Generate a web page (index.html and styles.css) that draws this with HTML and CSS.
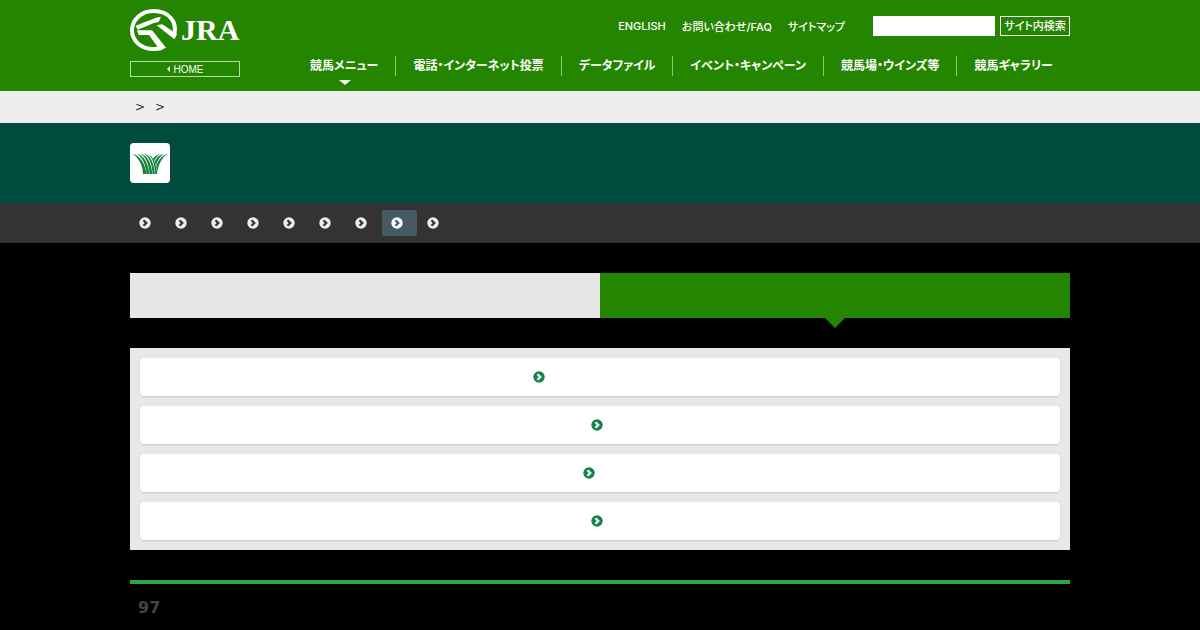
FILE: index.html
```html
<!DOCTYPE html>
<html lang="ja">

<head>
    <meta charset="UTF-8">
    <meta name="viewport" content="width=device-width, initial-scale=1.0">
    <link rel="stylesheet" href="styles.css">
    <title>JRA</title>
</head>

<body>
    <svg class="defs" width="0" height="0" aria-hidden="true">
        <symbol id="arrow" viewBox="0 0 12 12">
            <path fill="currentColor" fill-rule="evenodd" d="M6 .3a5.7 5.7 0 1 0 0 11.4a5.7 5.7 0 1 0 0-11.4zM5.3 2.4L8.9 6L5.3 9.6L3.7 8L5.7 6L3.7 4z" />
        </symbol>
    </svg>

    <header class="header">
        <div class="inner header-inner">
            <div class="brand">
                <a class="logo" href="#">
                    <svg class="logo-mark" viewBox="0 0 141 126" aria-hidden="true">
                        <path fill="none" stroke="#fff" stroke-width="12" d="M131 82C145 38 116 6 71 6C34 6 6 32 6 64C6 96 34 120 71 120C82 120 88 119 96 117" />
                        <path fill="#fff" d="M17 50L78 26L93 23L86 39L72 42L23 62zM80 49L97 46L141 76L133 91zM21 64L66 64L73 72L108 116L90 124L57 78L26 78z" />
                    </svg>
                    <span>JRA</span>
                </a>
                <a class="home" href="#">HOME</a>
            </div>
            <div class="menus">
                <div class="utility">
                    <a href="#">ENGLISH</a>
                    <a href="#">お問い合わせ/FAQ</a>
                    <a href="#">サイトマップ</a>
                    <form class="search">
                        <input type="text" name="q" aria-label="サイト内検索">
                        <button type="submit">サイト内検索</button>
                    </form>
                </div>
                <nav class="gnav">
                    <a class="current" href="#">競馬メニュー</a>
                    <a href="#">電話・インターネット投票</a>
                    <a href="#">データファイル</a>
                    <a href="#">イベント・キャンペーン</a>
                    <a href="#">競馬場・ウインズ等</a>
                    <a href="#">競馬ギャラリー</a>
                </nav>
            </div>
        </div>
    </header>

    <div class="breadcrumb">
        <div class="inner"><span>&gt;</span><span>&gt;</span></div>
    </div>

    <div class="title">
        <div class="inner">
            <svg class="title-icon" viewBox="0 0 120 120" aria-hidden="true">
                <rect width="120" height="120" rx="11" fill="#fff" />
                <g fill="#16833c">
                    <path d="M8 32C32 39 46 62 49 93H39C38 67 28 46 8 32z" />
                    <path d="M20 31C42 38 55 62 58 93H50C47 65 38 44 20 31z" />
                    <path d="M31 31C53 38 64 62 67 93H59C57 65 48 43 31 31z" />
                    <path d="M42 31C62 38 72 62 75 93H68C66 65 58 43 42 31z" />
                    <path d="M53 32C70 40 79 62 82 93H76C74 63 67 42 53 32z" />
                    <path d="M112 32C94 45 84 68 83 86L79 71C83 52 93 40 112 32z" />
                    <path d="M102 32C87 42 80 57 79 68L74 57C79 44 87 36 102 32z" />
                    <path d="M91 32C81 39 75 47 73 54L69 48C74 40 80 35 91 32z" />
                </g>
            </svg>
        </div>
    </div>

    <nav class="subnav">
        <div class="inner">
            <a href="#" aria-label="1"><svg class="arrow"><use href="#arrow" /></svg></a>
            <a href="#" aria-label="2"><svg class="arrow"><use href="#arrow" /></svg></a>
            <a href="#" aria-label="3"><svg class="arrow"><use href="#arrow" /></svg></a>
            <a href="#" aria-label="4"><svg class="arrow"><use href="#arrow" /></svg></a>
            <a href="#" aria-label="5"><svg class="arrow"><use href="#arrow" /></svg></a>
            <a href="#" aria-label="6"><svg class="arrow"><use href="#arrow" /></svg></a>
            <a href="#" aria-label="7"><svg class="arrow"><use href="#arrow" /></svg></a>
            <a class="current" href="#" aria-label="8"><svg class="arrow"><use href="#arrow" /></svg></a>
            <a href="#" aria-label="9"><svg class="arrow"><use href="#arrow" /></svg></a>
        </div>
    </nav>

    <main class="inner">
        <div class="tabs">
            <a href="#" aria-label="1"></a>
            <a class="current" href="#" aria-label="2"></a>
        </div>
        <div class="links">
            <a href="#" aria-label="1"><svg class="arrow"><use href="#arrow" /></svg><span class="label long"></span></a>
            <a href="#" aria-label="2"><svg class="arrow"><use href="#arrow" /></svg><span class="label"></span></a>
            <a href="#" aria-label="3"><svg class="arrow"><use href="#arrow" /></svg><span class="label medium"></span></a>
            <a href="#" aria-label="4"><svg class="arrow"><use href="#arrow" /></svg><span class="label"></span></a>
        </div>
        <h2 class="heading">97</h2>
    </main>
</body>

</html>
```

FILE: styles.css
```css
* {
    box-sizing: border-box;
}

body {
    margin: 0;
    background-color: #000;
    font-family: "DejaVu Sans", "Noto Sans CJK JP", sans-serif;
    font-size: 12px;
}

a {
    color: #fff;
    text-decoration: none;
}

.defs {
    display: block;
}

.inner {
    max-width: 980px;
    margin: 0 auto;
    padding: 0 20px;
}

.header {
    background-color: #248500;
    font-family: "Liberation Sans", "Noto Sans CJK JP", sans-serif;
    font-feature-settings: "palt";
}

.header-inner {
    display: flex;
    justify-content: space-between;
    min-height: 91px;
}

.brand {
    width: 110px;
    padding-top: 9px;
}

.logo {
    display: flex;
    align-items: center;
    gap: 4px;
    height: 42px;
    font-family: "Liberation Serif", serif;
    font-size: 30px;
    font-weight: bold;
}

.logo-mark {
    flex: none;
    width: 47px;
    height: 42px;
}

.home {
    display: flex;
    align-items: center;
    justify-content: center;
    gap: 4px;
    height: 16px;
    margin-top: 10px;
    border: 1px solid #b5dba6;
    font-size: 10px;
}

.home::before {
    content: "";
    border: 3px solid transparent;
    border-right-color: #fff;
    border-left: 0;
}

.menus {
    width: 760px;
    padding-top: 16px;
}

.utility {
    display: flex;
    align-items: center;
    justify-content: flex-end;
    gap: 16px;
    height: 20px;
    font-family: Inter, "Noto Sans CJK JP", sans-serif;
    font-size: 11px;
    font-weight: 500;
}

.search {
    display: flex;
    gap: 5px;
    margin-left: 12px;
}

.search input {
    width: 122px;
    height: 20px;
    border: 0;
    background-color: #fff;
}

.search button {
    width: 70px;
    height: 20px;
    padding: 0;
    border: 1px solid #fff;
    background: none;
    color: #fff;
    font: inherit;
    line-height: 16px;
}

.gnav {
    display: flex;
    margin-top: 20px;
    font-size: 12px;
    font-weight: bold;
    line-height: 20px;
}

.gnav a {
    position: relative;
    padding: 0 17px;
    border-left: 1px solid #8fc47d;
    white-space: nowrap;
}

.gnav a:first-child {
    padding-left: 0;
    border-left: 0;
}

.gnav .current::after {
    content: "";
    position: absolute;
    top: 24px;
    left: 29px;
    border: 6px solid transparent;
    border-top: 5px solid #fff;
    border-bottom: 0;
}

.breadcrumb {
    background-color: #eee;
    color: #333;
    font-size: 12px;
    line-height: 32px;
}

.breadcrumb span {
    margin-left: 5px;
    margin-right: 5px;
}

.title {
    padding: 20px 0;
    background-color: #004d40;
}

.title-icon {
    display: block;
    width: 40px;
    height: 40px;
}

.subnav {
    background-color: #333;
}

.subnav .inner {
    display: flex;
    align-items: center;
    gap: 1px;
    height: 40px;
}

.subnav a {
    display: flex;
    align-items: center;
    width: 35px;
    height: 26px;
    padding-left: 9px;
    border-radius: 2px;
    color: #eee;
}

.subnav .current {
    background-color: #455a64;
    color: #fff;
}

.arrow {
    width: 12px;
    height: 12px;
}

.tabs {
    display: flex;
    margin-top: 30px;
}

.tabs a {
    position: relative;
    flex: 1;
    height: 45px;
    background-color: #e6e6e6;
}

.tabs .current {
    background-color: #248500;
}

.tabs .current::after {
    content: "";
    position: absolute;
    top: 100%;
    left: 50%;
    margin-left: -10px;
    border: 10px solid transparent;
    border-top-color: #248500;
    border-bottom: 0;
}

.links {
    display: grid;
    gap: 10px;
    margin-top: 30px;
    padding: 10px;
    background-color: #e8e8e8;
}

.links a {
    display: flex;
    align-items: center;
    justify-content: center;
    height: 38px;
    border-radius: 4px;
    background-color: #fff;
    box-shadow: 0 1px 2px rgba(0, 0, 0, 0.15);
    color: #16834a;
}

.label {
    width: 6px;
}

.label.medium {
    width: 22px;
}

.label.long {
    width: 122px;
}

.heading {
    margin: 30px 0 0;
    padding: 13px 8px 0;
    border-top: 4px solid #2fa53f;
    color: #444;
    font-size: 16px;
    line-height: 22px;
}
```
